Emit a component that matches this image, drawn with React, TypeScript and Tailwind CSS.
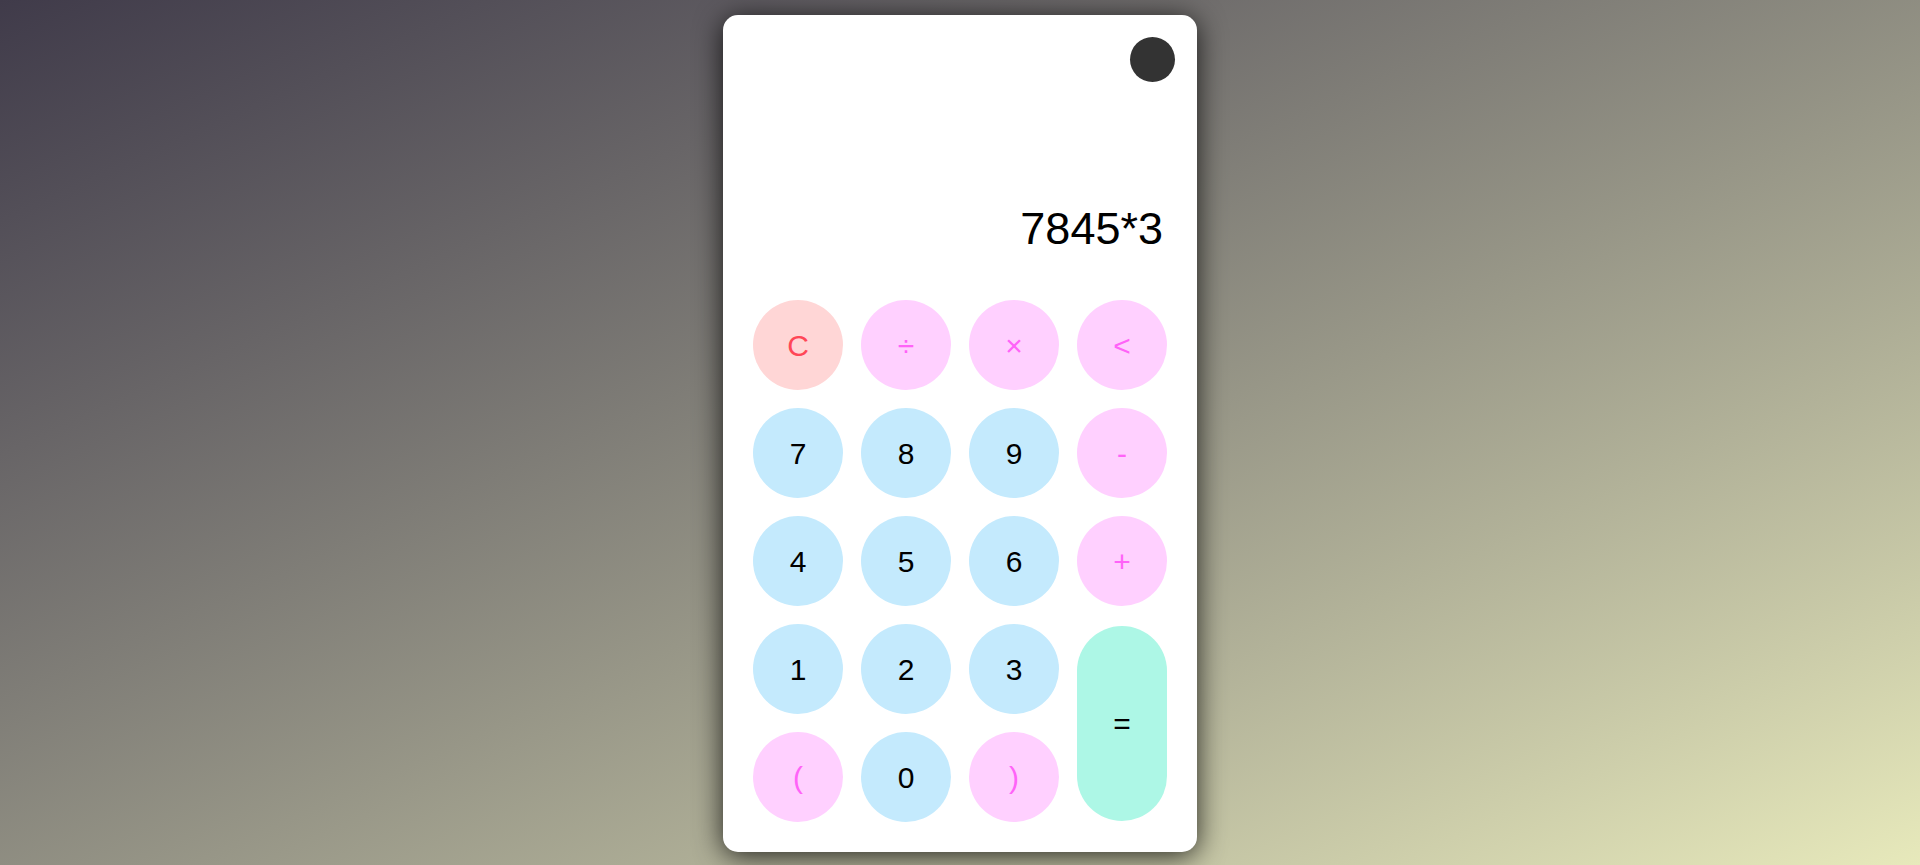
import React, { useState } from 'react';

type Key = { label: string; kind: 'clear' | 'op' | 'num' };

const keys: Key[] = [
  { label: 'C', kind: 'clear' },
  { label: '÷', kind: 'op' },
  { label: '×', kind: 'op' },
  { label: '<', kind: 'op' },
  { label: '7', kind: 'num' },
  { label: '8', kind: 'num' },
  { label: '9', kind: 'num' },
  { label: '-', kind: 'op' },
  { label: '4', kind: 'num' },
  { label: '5', kind: 'num' },
  { label: '6', kind: 'num' },
  { label: '+', kind: 'op' },
  { label: '1', kind: 'num' },
  { label: '2', kind: 'num' },
  { label: '3', kind: 'num' },
];

const bottomKeys: Key[] = [
  { label: '(', kind: 'op' },
  { label: '0', kind: 'num' },
  { label: ')', kind: 'op' },
];

const styles = {
  clear: 'bg-[#ffd6d6] text-[#ff4757]',
  op: 'bg-[#ffd0ff] text-[#ff63f8]',
  num: 'bg-[#c4eafd] text-black',
};

const App: React.FC = () => {
  const [expr, setExpr] = useState('7845*3');

  const press = (k: Key) => {
    if (k.label === 'C') return setExpr('');
    if (k.label === '<') return setExpr(expr.slice(0, -1));
    const map: Record<string, string> = { '÷': '/', '×': '*' };
    setExpr(expr + (map[k.label] || k.label));
  };

  const Btn = ({ k }: { k: Key }) => (
    <button
      onClick={() => press(k)}
      className={`w-[90px] h-[90px] rounded-full flex items-center justify-center text-[30px] ${styles[k.kind]}`}
    >
      {k.label}
    </button>
  );

  return (
    <div
      className="h-screen w-full overflow-hidden flex items-center justify-center bg-linear-to-br from-[#403b4a] to-[#e7e9bb]"
      style={{ fontFamily: '"Liberation Sans", Arial, sans-serif' }}
    >
      <div className="w-[474px] mt-[2px] bg-white rounded-[15px] shadow-[0_4px_28px_rgba(0,0,0,0.8)] flex flex-col">
        <div className="relative h-[285px] flex items-end justify-end pr-[34px] pb-[48px]">
          <button className="absolute top-[22px] right-[22px] w-[45px] h-[45px] rounded-full bg-[#333333]" />
          <div className="text-[45px] leading-[46px] text-black">{expr}</div>
        </div>
        <div className="grid grid-cols-4 gap-[18px] px-[30px] pb-[30px]">
          {keys.map((k) => (
            <Btn key={k.label} k={k} />
          ))}
          <button
            onClick={() => setExpr(expr)}
            className="row-span-2 self-center w-[90px] h-[195px] rounded-full bg-[#adf7e6] text-black text-[30px] flex items-center justify-center"
          >
            =
          </button>
          {bottomKeys.map((k) => (
            <Btn key={k.label} k={k} />
          ))}
        </div>
      </div>
    </div>
  );
};

export default App;
